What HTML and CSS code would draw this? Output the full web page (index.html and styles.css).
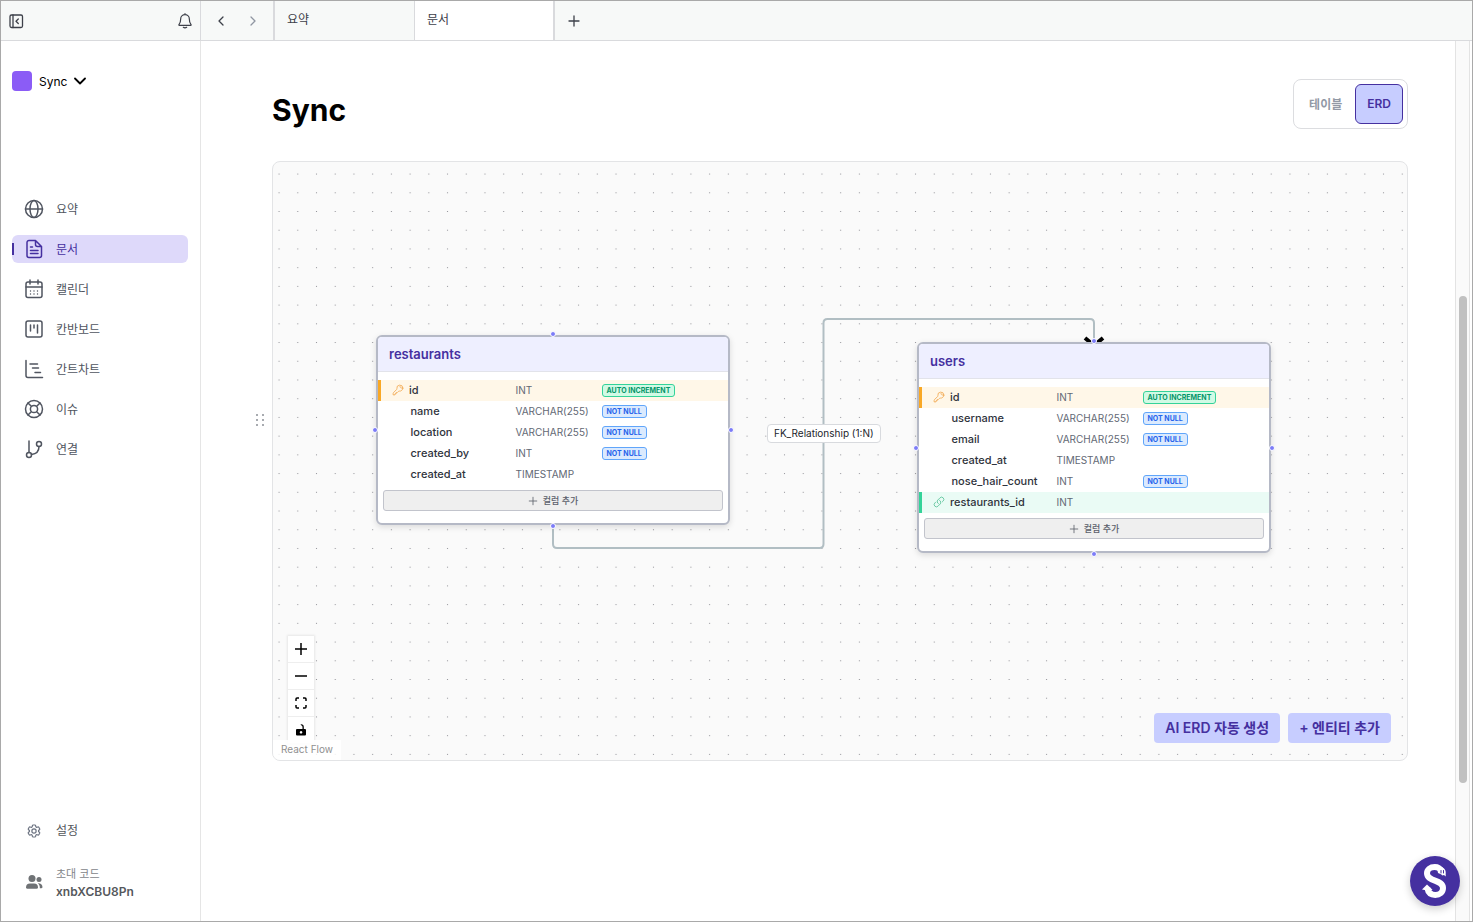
FILE: index.html
```html
<!DOCTYPE html>
<html lang="ko">
<head>
<meta charset="utf-8">
<meta name="viewport" content="width=device-width, initial-scale=1">
<title>Sync</title>
<link rel="stylesheet" href="styles.css">
</head>
<body>
<svg class="defs" width="0" height="0" aria-hidden="true">
  <symbol id="key" viewBox="0 0 24 24"><path d="M15.75 5.25a3 3 0 0 1 3 3m3 0a6 6 0 0 1-7.03 5.91c-.56-.1-1.16.03-1.56.43L10.5 17.25H8.25v2.25H6v2.25H2.25v-2.82c0-.6.24-1.17.66-1.59l6.5-6.5c.4-.4.53-1 .43-1.56A6 6 0 1 1 21.75 8.25Z"/></symbol>
  <symbol id="link" viewBox="0 0 24 24"><path d="M13.19 8.69a4.5 4.5 0 0 1 1.24 7.24l-4.5 4.5a4.5 4.5 0 0 1-6.36-6.36l1.76-1.76m13.35-.62 1.76-1.76a4.5 4.5 0 0 0-6.36-6.36l-4.5 4.5a4.5 4.5 0 0 0 1.24 7.24"/></symbol>
  <symbol id="plus" viewBox="0 0 24 24"><path d="M12 3v18M3 12h18"/></symbol>
</svg>
<header class="topbar">
  <div class="topbar-side">
    <button class="icon-btn" aria-label="사이드바 접기"><svg class="ic16" viewBox="0 0 16 16"><rect x="2" y="2" width="12.500" height="12.500" rx="1.500"/><path d="M5 2v12.500M10.300 6 8 8.200l2.300 2.300"/></svg></button>
    <button class="icon-btn" aria-label="알림"><svg class="ic16" viewBox="0 0 24 24"><path class="w2" d="M12 1v1.500M3 17.500c1.700-2 2.500-3.500 2.500-8.500a6.500 6.500 0 0 1 13 0c0 5 .8 6.500 2.500 8.500q.6 1-.6 1H3.600q-1.200 0-.6-1ZM9.500 21.500q2.500 1.800 5 0"/></svg></button>
  </div>
  <div class="history">
    <button class="icon-btn" aria-label="뒤로"><svg class="ic12" viewBox="0 0 12 12"><path d="M8 2 4 6l4 4"/></svg></button>
    <button class="icon-btn muted" aria-label="앞으로"><svg class="ic12" viewBox="0 0 12 12"><path d="m4 2 4 4-4 4"/></svg></button>
  </div>
  <nav class="tabs" aria-label="탭">
    <a class="tab" href="#summary">요약</a>
    <a class="tab active" href="#docs">문서</a>
  </nav>
  <button class="icon-btn add-tab" aria-label="새 탭"><svg class="ic12" viewBox="0 0 12 12"><path d="M6 1v10M1 6h10"/></svg></button>
</header>
<div class="shell">
  <aside class="sidebar">
    <button class="workspace"><span class="swatch"></span>Sync<svg class="ic12" viewBox="0 0 12 12"><path class="bold" d="m1 3.500 5 5 5-5"/></svg></button>
    <nav class="menu" aria-label="메뉴">
      <a href="#summary"><svg viewBox="0 0 20 20"><circle cx="10" cy="10" r="8.500"/><ellipse cx="10" cy="10" rx="4" ry="8.500"/><path d="M1.500 10h17"/></svg><span>요약</span></a>
      <a class="current" href="#docs"><svg viewBox="0 0 20 20"><path d="M11.500 1.500H5A2 2 0 0 0 3 3.500v13a2 2 0 0 0 2 2h10.500a2 2 0 0 0 2-2v-9l-6-6v4a2 2 0 0 0 2 2h4M6.500 8h2M6.500 11.500h7.500M6.500 14.500h7.500"/></svg><span>문서</span></a>
      <a href="#calendar"><svg viewBox="0 0 20 20"><rect x="2" y="3" width="16" height="15.500" rx="2"/><path d="M2 8h16M6 1v4M14 1v4"/><path class="dots" d="M6.500 12h.01M10 12h.01M13.500 12h.01M6.500 15h.01M10 15h.01M13.500 15h.01"/></svg><span>캘린더</span></a>
      <a href="#kanban"><svg viewBox="0 0 20 20"><rect x="2" y="2" width="16" height="16" rx="2"/><path d="M6.500 6v6M10 6v3M13.500 6v8"/></svg><span>칸반보드</span></a>
      <a href="#gantt"><svg viewBox="0 0 20 20"><path d="M2 1.500v15a2 2 0 0 0 2 2h14.500M6 5h7.500M8.500 9h6M11 13.500h5.500"/></svg><span>간트차트</span></a>
      <a href="#issues"><svg viewBox="0 0 20 20"><circle cx="10" cy="10" r="8.500"/><circle cx="10" cy="10" r="3.600"/><path d="m4 4 3.300 3.300M16 4l-3.300 3.300M4 16l3.300-3.300M16 16l-3.300-3.300"/></svg><span>이슈</span></a>
      <a href="#connect"><svg viewBox="0 0 20 20"><path d="M5 2v11.500M15 7.500c0 4.500-3 7.500-7.500 8"/><circle cx="5" cy="16" r="2.500"/><circle cx="15" cy="5" r="2.500"/></svg><span>연결</span></a>
    </nav>
    <div class="side-foot">
      <a class="settings" href="#settings"><svg viewBox="0 0 24 24"><path d="M9.600 3.900c.1-.5.600-.9 1.100-.9h2.600c.5 0 1 .4 1.100.9l.2 1.300c.1.400.3.700.6.900l.3.200c.3.200.7.200 1.100.1l1.200-.5c.5-.2 1.100 0 1.400.5l1.300 2.200c.3.500.2 1.100-.3 1.400l-1 .8c-.3.300-.4.600-.4 1v.4c0 .4.100.7.400 1l1 .8c.4.300.5.900.3 1.400l-1.300 2.200c-.3.500-.9.700-1.400.5l-1.200-.5c-.4-.1-.8-.1-1.100.1l-.3.200c-.3.200-.6.500-.6.900l-.2 1.300c-.1.500-.6.900-1.100.9h-2.600c-.5 0-1-.4-1.100-.9l-.2-1.300c-.1-.4-.3-.7-.6-.9l-.3-.2c-.3-.2-.7-.2-1.100-.1l-1.200.5c-.5.200-1.100 0-1.400-.5l-1.300-2.200c-.3-.5-.2-1.100.3-1.400l1-.8c.3-.3.400-.6.400-1v-.4c0-.4-.1-.7-.4-1l-1-.8c-.4-.3-.5-.9-.3-1.400l1.300-2.200c.3-.5.900-.7 1.400-.5l1.200.5c.4.100.8.100 1.100-.1l.3-.2c.3-.2.6-.5.6-.9Z"/><circle cx="12" cy="12" r="3.200"/></svg>설정</a>
      <div class="invite">
        <svg viewBox="0 0 18 18"><circle cx="7" cy="5.500" r="3.500"/><circle cx="14" cy="6.500" r="2.500"/><path d="M1 14.500a4 4 0 0 1 4-4h4a4 4 0 0 1 4 4c0 .8-.6 1.200-1.300 1.200H2.300c-.8 0-1.300-.4-1.300-1.200ZM12.800 10.300c2.500-.3 4.700 1.200 4.700 3.800 0 .7-.4 1.100-1 1.100h-1.700c.2-2-.5-3.700-2-4.900Z"/></svg>
        <div><div class="invite-label">초대 코드</div><div class="invite-code">xnbXCBU8Pn</div></div>
      </div>
    </div>
  </aside>
  <main class="content">
    <div class="head">
      <h1>Sync</h1>
      <div class="switch" role="group" aria-label="보기">
        <button>테이블</button><button class="on" aria-pressed="true">ERD</button>
      </div>
    </div>
    <div class="board">
      <span class="grip"><svg width="8" height="14" viewBox="0 0 8 14"><path d="M0 1h2v2H0zM6 1h2v2H6zM0 6h2v2H0zM6 6h2v2H6zM0 11h2v2H0zM6 11h2v2H6z"/></svg></span>
      <section class="canvas" aria-label="ERD">
        <svg class="layer" aria-hidden="true">
          <defs><pattern id="grid" x="-3.300" y="2.700" width="18.720" height="18.720" patternUnits="userSpaceOnUse"><circle cx="9.360" cy="9.360" r=".6" fill="#85858c"/></pattern></defs>
          <rect width="100%" height="100%" fill="url(#grid)"/>
          <path class="edge" d="M280 364v18q0 4 4 4h262.500q4 0 4-4V161q0-4 4-4H817q4 0 4 4v19"/>
          <path class="crow" d="m812 176 6 5M830 176l-6 5"/>
        </svg>
        <span class="edge-label">FK_Relationship (1:N)</span>
        <article class="node restaurants">
          <h2>restaurants</h2>
          <table>
            <tr class="pk"><th scope="row"><svg><use href="#key"/></svg>id</th><td>INT</td><td><span class="tag green">AUTO INCREMENT</span></td></tr>
            <tr><th scope="row">name</th><td>VARCHAR(255)</td><td><span class="tag">NOT NULL</span></td></tr>
            <tr><th scope="row">location</th><td>VARCHAR(255)</td><td><span class="tag">NOT NULL</span></td></tr>
            <tr><th scope="row">created_by</th><td>INT</td><td><span class="tag">NOT NULL</span></td></tr>
            <tr><th scope="row">created_at</th><td>TIMESTAMP</td><td></td></tr>
          </table>
          <button class="add-col"><svg><use href="#plus"/></svg>컬럼 추가</button>
          <i class="port top"></i><i class="port bottom"></i><i class="port left"></i><i class="port right"></i>
        </article>
        <article class="node users">
          <h2>users</h2>
          <table>
            <tr class="pk"><th scope="row"><svg><use href="#key"/></svg>id</th><td>INT</td><td><span class="tag green">AUTO INCREMENT</span></td></tr>
            <tr><th scope="row">username</th><td>VARCHAR(255)</td><td><span class="tag">NOT NULL</span></td></tr>
            <tr><th scope="row">email</th><td>VARCHAR(255)</td><td><span class="tag">NOT NULL</span></td></tr>
            <tr><th scope="row">created_at</th><td>TIMESTAMP</td><td></td></tr>
            <tr><th scope="row">nose_hair_count</th><td>INT</td><td><span class="tag">NOT NULL</span></td></tr>
            <tr class="fk"><th scope="row"><svg><use href="#link"/></svg>restaurants_id</th><td>INT</td><td></td></tr>
          </table>
          <button class="add-col"><svg><use href="#plus"/></svg>컬럼 추가</button>
          <i class="port top"></i><i class="port bottom"></i><i class="port left"></i><i class="port right"></i>
        </article>
        <div class="controls">
          <button aria-label="확대"><svg viewBox="0 0 12 12"><path d="M6 0v12M0 6h12"/></svg></button>
          <button aria-label="축소"><svg viewBox="0 0 12 12"><path d="M0 6h12"/></svg></button>
          <button aria-label="화면 맞춤"><svg viewBox="0 0 12 12"><path d="M1 4V2q0-1 1-1h2M8 1h2q1 0 1 1v2M11 8v2q0 1-1 1H8M4 11H2q-1 0-1-1V8"/></svg></button>
          <button aria-label="잠금"><svg viewBox="0 0 12 12"><path class="solid" fill-rule="evenodd" d="M2 5h5.500V3Q7.500 1.300 6 1.300L5.600.3Q8.800 0 8.800 3v2H10q1 0 1 1v4.500q0 1-1 1H2q-1 0-1-1V6q0-1 1-1Zm4 2a1.300 1.300 0 1 0 .1 0Z"/></svg></button>
        </div>
        <a class="credit" href="#flow">React Flow</a>
        <div class="actions"><button>AI ERD 자동 생성</button><button>+ 엔티티 추가</button></div>
      </section>
    </div>
  </main>
  <div class="track" aria-hidden="true"><div class="thumb"></div></div>
</div>
<button class="helper" aria-label="Sync 도우미"><svg viewBox="0 0 50 50"><path class="body" d="M31.500 15C30 12.200 27.500 11 24.800 11c-4.600 0-7.800 2.600-7.800 6.300 0 8.700 16 6 16 14.700 0 4.200-3.200 6.900-7.700 6.900-4.300 0-7.200-2.500-8-6.900"/><path class="fill" d="M12 33.500 17 28.500l5.500 5.300-4 1Z"/><path class="fill" d="M27 10.500c4-1 8.500 2 8.700 5.500v4.500l-1.700-1.500-1.500.6-1.500-1.300-3-1.300Z"/><path class="eyes" d="M31 14.500v2.500M33.500 14.500v2.500"/></svg></button>
</body>
</html>
```
FILE: styles.css
```css
* { box-sizing: border-box; }
body {
  margin: 0;
  min-height: 100vh;
  display: flex;
  flex-direction: column;
  border: 1px solid #a9a9a9;
  background: #fff;
  color: #000;
  font-family: Inter, "Noto Sans CJK KR", sans-serif;
  font-size: 12px;
}
button { font: inherit; color: inherit; border: 0; background: none; padding: 0; cursor: pointer; }
a { color: inherit; text-decoration: none; }
svg { flex: none; fill: none; stroke: currentColor; stroke-width: 1.5; stroke-linecap: round; stroke-linejoin: round; }
.defs { position: absolute; }
.ic16 { width: 16px; height: 16px; }
.ic12 { width: 12px; height: 12px; }
.w2 { stroke-width: 1.8; }
.bold { stroke-width: 1.8; }

.topbar { display: flex; height: 40px; border-bottom: 1px solid #d9dadd; background: #f7f9f8; color: #3d4049; }
.topbar svg { stroke-width: 1.3; }
.topbar-side { width: 200px; display: flex; align-items: center; justify-content: space-between; padding: 0 7px; border-right: 1px solid #d9dadd; }
.icon-btn { display: flex; align-items: center; justify-content: center; }
.history { display: flex; align-items: center; gap: 20px; padding: 0 14px; border-right: 2px solid #d9dadd; }
.muted { color: #9096a2; }
.tabs { display: flex; border-right: 2px solid #d9dadd; }
.tab { width: 139px; padding: 9px 12px; line-height: 20px; }
.tab.active { background: #fff; border-left: 1px solid #d9dadd; }
.add-tab { padding: 0 13px; }

.shell { flex: 1; display: flex; }
.sidebar { width: 200px; flex: none; display: flex; flex-direction: column; border-right: 1px solid #e5e5e5; padding: 28px 12px 21px 11px; }
.workspace { display: flex; align-items: center; gap: 7px; height: 24px; align-self: flex-start; }
.swatch { width: 20px; height: 20px; border-radius: 4px; background: #8b5cf6; }
.menu { display: flex; flex-direction: column; gap: 12px; margin-top: 102px; }
.menu a { display: flex; align-items: center; gap: 12px; height: 28px; padding: 0 12px; border-radius: 6px; color: #505560; }
.menu span { padding-bottom: 2px; }
.menu svg { width: 20px; height: 20px; }
.menu .dots { stroke-width: 1.4; }
.menu .current { position: relative; background: #ded9fa; color: #4530a0; }
.menu .current::before { content: ""; position: absolute; left: 0; top: 8px; width: 2px; height: 12px; background: #4530a0; }
.side-foot { margin-top: auto; display: flex; flex-direction: column; gap: 23px; color: #55585c; }
.settings { display: flex; align-items: center; gap: 14px; padding-left: 14px; line-height: 20px; }
.settings svg { width: 16px; height: 16px; color: #6b7280; stroke-width: 1.8; }
.invite { display: flex; align-items: center; gap: 13px; padding-left: 13px; }
.invite svg { width: 18px; height: 18px; fill: #6f7275; stroke: none; }
.invite-label { font-size: 11px; line-height: 20px; color: #83868a; }
.invite-code { font-weight: 600; line-height: 16px; }

.content { flex: 1; min-width: 0; padding: 38px 47px 60px 71px; }
.head { display: flex; align-items: flex-start; justify-content: space-between; }
h1 { margin: 11px 0 0; font-size: 30px; line-height: 40px; font-weight: 700; }
.switch { display: flex; gap: 2px; padding: 4px; border: 1px solid #dcdde0; border-radius: 8px; color: #9299a5; font-weight: 600; }
.switch button { height: 40px; padding: 0 11px 2px; border-radius: 6px; }
.switch .on { border: 1px solid #4530a0; background: #c7cdff; color: #4530a0; }

.board { position: relative; margin-top: 31px; }
.grip { position: absolute; left: -16px; top: 252px; color: #a8abb0; }
.grip svg { fill: currentColor; stroke: none; display: block; }
.canvas { position: relative; height: 600px; overflow: hidden; border: 1px solid #e3e4e6; border-radius: 8px; background: #fafafa; }
.layer { position: absolute; left: 0; top: 0; width: 100%; height: 100%; stroke: none; }
.edge { stroke: #b1bec3; stroke-width: 2; }
.crow { stroke: #000; stroke-width: 4; stroke-linecap: butt; }
.edge-label { position: absolute; left: 494px; top: 262px; padding: 0 6px; line-height: 17px; border: 1px solid #d8dade; border-radius: 4px; background: #fff; color: #22252c; font-size: 10px; white-space: nowrap; }

.node { position: absolute; width: 354px; padding-bottom: 12px; border: 2px solid #b5b9c6; border-radius: 6px; background: #fff; box-shadow: 0 2px 6px rgba(0, 0, 0, .13); }
.restaurants { left: 103px; top: 173px; }
.users { left: 644px; top: 180px; }
.node h2 { margin: 0 0 8px; padding: 0 11px; font-size: 13px; line-height: 34px; font-weight: 600; color: #4530a0; background: #eeefff; border-bottom: 1px solid #e2e3ea; border-radius: 4px 4px 0 0; }
.node table { width: 100%; table-layout: fixed; border-collapse: collapse; font-size: 11px; line-height: 15px; }
.node tr { height: 21px; }
.node th { width: 135px; padding: 0 0 0 31px; text-align: left; font-weight: 500; color: #2f333c; white-space: nowrap; }
.node td { padding: 0 0 0 1px; color: #626874; font-size: 10px; vertical-align: middle; }
.node td:nth-child(2) { width: 86px; }
.node th svg { width: 12px; height: 12px; margin-right: 5px; vertical-align: -2px; }
.node .pk th, .node .fk th { padding-left: 11px; }
.pk { background: #fff7e8; }
.node .pk th { border-left: 3px solid #f9a825; }
.node .fk th { border-left: 3px solid #34d399; }
.pk svg { color: #f0a040; }
.fk { background: #eafbf5; }
.fk svg { color: #48bb8d; }
.tag { display: block; width: fit-content; padding: 0 4px; border: 1px solid #60a5fa; border-radius: 3px; background: #dbeafe; color: #2563eb; font-size: 7px; line-height: 11px; font-weight: 700; }
.tag.green { border-color: #34d399; background: #d1fae5; color: #059669; }
.add-col { display: flex; align-items: center; justify-content: center; gap: 5px; width: 340px; height: 21px; margin: 5px auto 0; border: 1px solid #c2c4cc; border-radius: 3px; background: #efefef; color: #5b606b; font-size: 9px; font-weight: 500; }
.add-col svg { width: 10px; height: 10px; stroke-width: 2; }
.port { position: absolute; width: 6px; height: 6px; border: 1px solid #fff; border-radius: 50%; background: #7c7cf8; }
.port.top { top: -6px; left: 172px; }
.port.bottom { bottom: -6px; left: 172px; }
.port.left { left: -6px; top: 50%; margin-top: -3px; }
.port.right { right: -6px; top: 50%; margin-top: -3px; }

.controls { position: absolute; left: 15px; top: 474px; width: 26px; display: flex; flex-direction: column; box-shadow: 0 0 2px 1px rgba(0, 0, 0, .08); }
.controls button { height: 27px; display: flex; align-items: center; justify-content: center; background: #fff; border-bottom: 1px solid #eee; }
.controls svg { width: 12px; height: 12px; stroke-linecap: butt; }
.controls .solid { fill: #000; stroke: none; }
.credit { position: absolute; left: 0; bottom: 0; padding: 2px 8px 3px; background: rgba(255, 255, 255, .85); color: #909090; font-size: 10px; line-height: 15px; }
.actions { position: absolute; right: 16px; bottom: 17px; display: flex; gap: 8px; color: #4530a0; font-size: 14px; font-weight: 600; }
.actions button { height: 30px; padding: 0 11px 3px; border-radius: 4px; background: #c7cdff; }

.track { width: 15px; flex: none; margin-right: 2px; border: solid #e3e3e3; border-width: 0 1px; background: #fafafa; padding: 255px 3px 0; }
.thumb { width: 8px; height: 487px; border-radius: 4px; background: #c1c1c1; }
.helper { position: fixed; right: 13px; bottom: 16px; width: 50px; height: 50px; border-radius: 50%; background: #4530a0; box-shadow: 0 3px 8px rgba(0, 0, 0, .2); }
.helper svg { display: block; width: 50px; height: 50px; }
.helper .body { stroke: #fff; stroke-width: 6; stroke-linecap: butt; }
.helper .fill { fill: #fff; stroke: none; }
.helper .eyes { stroke: #4530a0; stroke-width: 1; }
```
